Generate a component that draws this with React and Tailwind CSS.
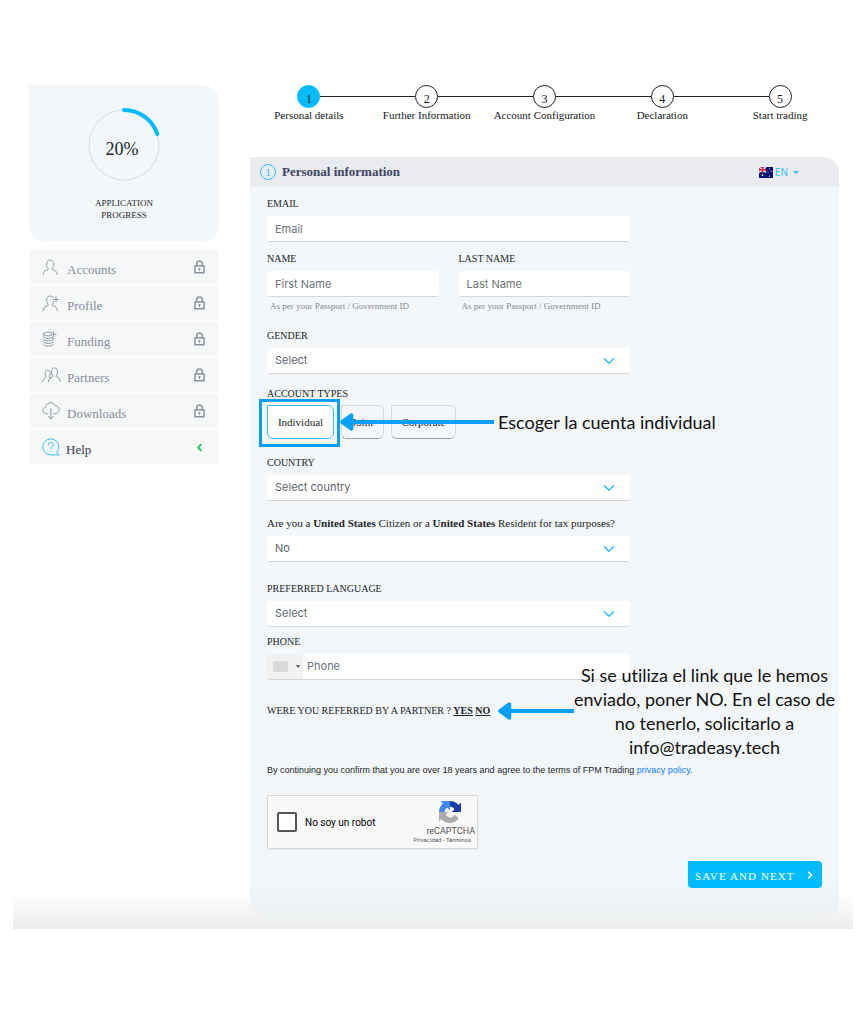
import React from 'react';
import { ChevronDown, ChevronRight, ChevronLeft } from 'lucide-react';

const STEPS = ['Personal details', 'Further Information', 'Account Configuration', 'Declaration', 'Start trading'];

const PersonIcon = () => (
  <svg width="17" height="17" viewBox="0 0 17 17" fill="none" stroke="currentColor" strokeWidth="0.9" strokeLinecap="round">
    <path d="M1 15.5c.3-3 2-4.3 4.8-4.8.5-.2.6-.8.3-1.2C5 8.200 4.600 6.800 4.600 5.200 4.600 2.700 6 1 8.100 1s3.600 1.700 3.600 4.200c0 1.600-.5 3-1.600 4.300-.3.4-.2 1 .3 1.200 2.900.5 4.600 1.800 4.900 4.800" />
  </svg>
);

const PersonPlusIcon = () => (
  <svg width="18" height="17" viewBox="0 0 18 17" fill="none" stroke="currentColor" strokeWidth="0.9" strokeLinecap="round">
    <path d="M11.200 2.400C10.600 1.500 9.600 1 8.300 1 6.100 1 4.700 2.700 4.700 5.200c0 1.600.5 3 1.500 4.300.3.4.2 1-.3 1.200C3.100 11.200 1.400 12.500 1 15.500M11.700 6.500c-.2 1.100-.6 2.100-1.400 3-.3.4-.2 1 .3 1.200 2.900.5 4.500 1.800 4.800 4.800" />
    <path d="M14 1.800v5.400M11.300 4.500h5.400" />
  </svg>
);

const CoinsIcon = () => (
  <svg width="17" height="17" viewBox="0 0 17 17" fill="none" stroke="currentColor" strokeWidth="0.9" strokeLinecap="round">
    <path d="M9.500 1.700C8.600 1.300 7.500 1.200 6.300 1.200c-2.800 0-5 .8-5 1.800s2.200 1.900 5 1.900c1.200 0 2.300-.2 3.200-.5" />
    <path d="M1.300 5.500c0 1 2.200 1.900 5 1.900s5-.9 5-1.900M1.300 8c0 1 2.200 1.900 5 1.900s5-.9 5-1.900M1.300 10.600c0 1 2.200 1.900 5 1.900s5-.9 5-1.900M1.300 13.200c0 1 2.200 1.900 5 1.900s5-.9 5-1.900M1.300 3v1.200M11.300 7v1" />
    <path d="M11.700.8v4.800M9.300 3.200h4.800" />
  </svg>
);

const PartnersIcon = () => (
  <svg width="19" height="17" viewBox="0 0 19 17" fill="none" stroke="currentColor" strokeWidth="0.9" strokeLinecap="round">
    <path d="M.8 14.500c.2-2.400 1.200-3.500 3-4 .5-.2.500-.6.200-1-.7-.9-1-1.900-1-3C3 4.500 4 3.300 5.700 3.300c1.600 0 2.600 1.200 2.600 3.200 0 1.100-.3 2.100-1 3-.3.4-.2.800.2 1 .6.2 1 .4 1.400.7" />
    <path d="M6.500 14.500c.3-2.700 1.600-4 4-4.500.5-.2.500-.8.200-1.200C9.900 7.700 9.500 6.500 9.500 5c0-2.400 1.100-4 3-4s3 1.600 3 4c0 1.500-.4 2.700-1.200 3.800-.3.400-.2 1 .2 1.200 2.400.5 3.500 1.800 3.800 4.500" />
  </svg>
);

const CloudIcon = () => (
  <svg width="18" height="18" viewBox="0 0 18 18" fill="none" stroke="currentColor" strokeWidth="0.9" strokeLinecap="round" strokeLinejoin="round">
    <path d="M6 11.800H4.300C2.300 11.800.8 10.400.8 8.600c0-1.600 1.100-2.900 2.600-3.200C3.700 2.700 5.900.8 8.600.8c2.200 0 4 1.200 4.800 3.100 2.100.1 3.800 1.800 3.800 3.900 0 2.200-1.700 4-3.900 4h-1.800" />
    <path d="M8.900 6.500v10.300M6.300 14.300l2.600 2.600 2.600-2.600" />
  </svg>
);

const HelpIcon = () => (
  <svg width="18" height="18" viewBox="0 0 18 18" fill="none" stroke="#35bdf6" strokeWidth="1" strokeLinecap="round" strokeLinejoin="round">
    <path d="M16.800 16.900H8.800A8 8 0 1 1 16.800 8.900c0 2-.7 3.800-1.900 5.200z" />
    <path d="M6.300 6.800c0-1.500 1.100-2.500 2.600-2.500s2.600 1 2.600 2.400c0 1.900-2.600 2-2.600 4M8.900 12.900v.2" />
  </svg>
);

const LockIcon = () => (
  <svg width="11" height="14" viewBox="0 0 11 14" fill="none" stroke="#8b91a3" strokeWidth="1.500">
    <path d="M1 6h9v6.800H1zM2.700 6V3.800C2.700 2.100 3.900 1 5.500 1s2.800 1.100 2.800 2.800V6" />
    <path strokeWidth="1.200" d="M5.500 8.800v2.200M4.500 8.500h2" />
  </svg>
);

const FlagIcon = () => (
  <svg width="14" height="11" viewBox="0 0 14 10" preserveAspectRatio="none">
    <path fill="#0a1172" d="M0 0h14v10H0z" />
    <path stroke="#fff" strokeWidth="1.200" d="M0 0l7 5M7 0L0 5" />
    <path stroke="#f6a9b4" strokeWidth="2" d="M3.500 0v5M0 2.500h7" />
    <path stroke="#e0243a" strokeWidth="1.200" d="M3.500 0v5M0 2.500h7" />
    <g fill="#fff">
      <circle cx="3.500" cy="7.600" r=".9" />
      <circle cx="10.500" cy="1.700" r=".5" />
      <circle cx="12.300" cy="4" r=".5" />
      <circle cx="9" cy="4.500" r=".5" />
      <circle cx="10.500" cy="8.300" r=".5" />
    </g>
  </svg>
);

const RecaptchaLogo = () => (
  <svg width="22" height="22" viewBox="0 0 64 64">
    <path fill="#1c3aa9" d="M64 31.955l-.033-1.370V4.687l-7.160 7.160C50.948 4.674 42.033.093 32.050.093c-10.400 0-19.622 4.960-25.458 12.640l11.736 11.860a15.550 15.550 0 0 1 4.754-5.334c2.050-1.600 4.952-2.906 8.968-2.906.485 0 .86.057 1.135.163 4.976.393 9.288 3.140 11.828 7.124l-8.307 8.307L64 31.953" />
    <path fill="#4285f4" d="M31.862.094l-1.370.033H4.594l7.160 7.160C4.580 13.147 0 22.060 0 32.046c0 10.400 4.960 19.622 12.640 25.458L24.500 45.768a15.550 15.550 0 0 1-5.334-4.754c-1.600-2.050-2.906-4.952-2.906-8.968 0-.485.057-.86.163-1.135.393-4.976 3.140-9.288 7.124-11.828l8.307 8.307L31.860.095" />
    <path fill="#ababab" d="M.001 32.045l.033 1.370v25.898l7.160-7.160c5.860 7.173 14.774 11.754 24.760 11.754 10.400 0 19.622-4.960 25.458-12.640l-11.736-11.860a15.550 15.550 0 0 1-4.754 5.334c-2.050 1.600-4.952 2.906-8.968 2.906-.485 0-.86-.057-1.135-.163-4.976-.393-9.288-3.140-11.828-7.124l8.307-8.307L0 32.046" />
  </svg>
);

const MENU = [
  { label: 'Accounts', Icon: PersonIcon },
  { label: 'Profile', Icon: PersonPlusIcon },
  { label: 'Funding', Icon: CoinsIcon },
  { label: 'Partners', Icon: PartnersIcon },
  { label: 'Downloads', Icon: CloudIcon },
];

const labelClass = 'mb-1 block text-[10px] leading-4';
const fieldClass =
  "block h-[26px] w-full appearance-none rounded-[3px] border-b border-[#d3d7db] bg-white px-2 font-['Inter',sans-serif] text-[11px] text-[#5f666d] outline-none placeholder:text-[#6c757d]";
const noteClass =
  "font-['Lato',sans-serif] text-lg leading-6 whitespace-nowrap text-[#111] [font-variant-ligatures:none]";

function SelectField({ id, option }) {
  return (
    <div className="grid items-center">
      <select id={id} className={`${fieldClass} col-start-1 row-start-1`}>
        <option>{option}</option>
      </select>
      <ChevronDown size={18} strokeWidth={2} className="pointer-events-none col-start-1 row-start-1 mr-3 justify-self-end text-[#35bdf6]" />
    </div>
  );
}

function NameField({ id, label, placeholder }) {
  return (
    <div>
      <label htmlFor={id} className={labelClass}>{label}</label>
      <input id={id} type="text" placeholder={placeholder} className={fieldClass} />
      <p className="pl-[3px] pt-px text-[9px] leading-4 whitespace-nowrap text-[#85898d]">As per your Passport / Government ID</p>
    </div>
  );
}

function Arrow({ length }) {
  return (
    <svg width={length} height="18" className="shrink-0" fill="#05a0f5">
      <path d={`M11 7H${length}v4H11z`} />
      <path d="M2 9L11.500 2v14z" stroke="#05a0f5" strokeWidth="3.500" strokeLinejoin="round" />
    </svg>
  );
}

function Sidebar() {
  return (
    <aside className="w-[190px] shrink-0">
      <div className="flex flex-col items-center rounded-2xl rounded-tl-none bg-[#f3f7fa] pt-[22px] pb-5">
        <div className="grid place-items-center">
          <svg width="76" height="76" viewBox="0 0 76 76" fill="none" className="col-start-1 row-start-1">
            <circle cx="38" cy="38" r="35" stroke="#d9dadc" />
            <path d="M38 3A35 35 0 0 1 71.300 27.200" stroke="#00bcff" strokeWidth="4" strokeLinecap="round" />
          </svg>
          <span className="col-start-1 row-start-1 pt-2 pr-1 text-lg leading-6">20%</span>
        </div>
        <p className="mt-[14px] text-center text-[9px] leading-3">APPLICATION<br />PROGRESS</p>
      </div>
      <nav className="mt-[9px] flex flex-col gap-0.5 text-[13px] text-[#868c9c]">
        {MENU.map(({ label, Icon }) => (
          <a key={label} href="#" className="flex h-[34px] items-center bg-[#f6f8f8] pr-[14px] pl-[13px]">
            <span className="w-[25px]"><Icon /></span>
            <span className="flex-1 pt-1.5">{label}</span>
            <LockIcon />
          </a>
        ))}
        <a href="#" className="flex h-[34px] items-center bg-[#f6f8f8] pr-[14px] pl-[13px]">
          <span className="w-6"><HelpIcon /></span>
          <span className="flex-1 pt-1.5 text-[#343a52]">Help</span>
          <ChevronLeft size={11} strokeWidth={4} className="text-[#27c765]" />
        </a>
      </nav>
    </aside>
  );
}

function Stepper() {
  return (
    <ol className="grid grid-cols-5 text-center text-[11px] leading-[14px] text-[#17191c]">
      {STEPS.map((step, i) => (
        <li key={step}>
          <div className="flex items-center">
            <span className={`h-px flex-1 ${i === 0 ? '' : 'bg-[#222]'}`} />
            <span className={`flex size-[23px] items-center justify-center rounded-full border pt-1 text-xs ${i === 0 ? 'border-[#00bcff] bg-[#00bcff]' : 'border-[#222] bg-white'}`}>
              {i + 1}
            </span>
            <span className={`h-px flex-1 ${i === STEPS.length - 1 ? '' : 'bg-[#222]'}`} />
          </div>
          <span className="whitespace-nowrap">{step}</span>
        </li>
      ))}
    </ol>
  );
}

function AccountTypes() {
  const other = 'h-[34px] rounded-md rounded-tl-none border border-[#d3d7db] border-b-[#444] [border-bottom-style:dotted]';
  return (
    <fieldset className="mt-3">
      <legend className="mb-[3px] text-[10px] leading-4">ACCOUNT TYPES</legend>
      <div className="relative flex gap-[7px] text-[11px]">
        <div className="relative">
          <button type="button" className="h-[34px] w-[67px] rounded-md rounded-tl-none border border-[#35bdf6] bg-white">Individual</button>
          <div className="pointer-events-none absolute -top-1.5 -right-1.5 -bottom-2 -left-2 border-3 border-[#05a0f5]" />
        </div>
        <button type="button" className={`${other} w-[43px]`}>Joint</button>
        <button type="button" className={`${other} w-[65px]`}>Corporate</button>
        {/* Note on the chosen account type */}
        <div className="pointer-events-none absolute inset-y-0 left-[73px] flex items-center gap-1">
          <Arrow length={154} />
          <p className={noteClass}>Escoger la cuenta individual</p>
        </div>
      </div>
    </fieldset>
  );
}

function PersonalForm() {
  return (
    <form className="flex flex-col rounded-b-2xl bg-gradient-to-t from-[#ecf0f3] to-[#f3f7fa] to-[40px] pt-[9px] pr-[17px] pb-[29px] pl-[17px]">
      <div className="w-full max-w-[363px]">
        <label htmlFor="email" className={labelClass}>EMAIL</label>
        <input id="email" type="email" placeholder="Email" className={fieldClass} />

        <div className="mt-[9px] grid grid-cols-2 gap-5">
          <NameField id="first-name" label="NAME" placeholder="First Name" />
          <NameField id="last-name" label="LAST NAME" placeholder="Last Name" />
        </div>

        <div className="mt-[14px]">
          <label htmlFor="gender" className={labelClass}>GENDER</label>
          <SelectField id="gender" option="Select" />
        </div>

        <AccountTypes />

        <div className="mt-4">
          <label htmlFor="country" className={labelClass}>COUNTRY</label>
          <SelectField id="country" option="Select country" />
        </div>

        <div className="mt-[14px]">
          <label htmlFor="us-resident" className="mb-[5px] block text-[11px] leading-4 whitespace-nowrap">
            Are you a <b>United States</b> Citizen or a <b>United States</b> Resident for tax purposes?
          </label>
          <SelectField id="us-resident" option="No" />
        </div>

        <div className="mt-[19px]">
          <label htmlFor="language" className={labelClass}>PREFERRED LANGUAGE</label>
          <SelectField id="language" option="Select" />
        </div>

        <div className="mt-[7px]">
          <label htmlFor="phone" className={labelClass}>PHONE</label>
          <div className="flex h-[26px] rounded-[3px] border-b border-[#d3d7db] bg-white">
            <button type="button" aria-label="Dial code" className="flex w-9 shrink-0 items-center gap-2 bg-[#f1f1f1] pl-1.5">
              <span className="h-[11px] w-[15px] rounded-xs bg-[#dadada]" />
              <span className="border-x-2 border-t-3 border-x-transparent border-t-[#555]" />
            </button>
            <input id="phone" type="tel" placeholder="Phone" className="min-w-0 flex-1 px-1 font-['Inter',sans-serif] text-[11px] outline-none placeholder:text-[#6c757d]" />
          </div>
        </div>
      </div>

      <div className="relative mt-[23px] text-[10px] leading-4">
        WERE YOU REFERRED BY A PARTNER ? <a href="#" className="font-bold underline">YES</a> <a href="#" className="font-bold underline">NO</a>
        {/* Note on the referral answer */}
        <div className="pointer-events-none absolute inset-y-0 left-[231px] flex items-center">
          <Arrow length={76} />
          <p className={`${noteClass} text-center`}>
            Si se utiliza el link que le hemos<br />
            enviado, poner NO. En el caso de<br />
            no tenerlo, solicitarlo a<br />
            info@tradeasy.tech
          </p>
        </div>
      </div>

      <p className="mt-[43px] font-['Liberation_Sans',sans-serif] text-[9px] leading-4">
        By continuing you confirm that you are over 18 years and agree to the terms of FPM Trading <a href="#" className="text-[#087cff]">privacy policy</a>.
      </p>

      <div className="mt-[17px] flex h-[54px] w-[211px] items-center rounded-xs border border-[#d6d6d6] bg-[#f9f9f9] pr-0.5 pl-[9px] font-['Roboto',sans-serif] shadow-xs">
        <input id="robot" type="checkbox" className="size-5 appearance-none rounded-xs border-2 border-[#555] bg-white" />
        <label htmlFor="robot" className="flex-1 pl-2 text-[10px] text-black">No soy un robot</label>
        <div className="flex flex-col items-end text-[#555]">
          <span className="mr-3.5"><RecaptchaLogo /></span>
          <span className="mt-[3px] text-[9px] leading-[10px]">reCAPTCHA</span>
          <span className="mr-1 text-[6px] leading-2">Privacidad - Términos</span>
        </div>
      </div>

      <button type="submit" className="mt-3 flex h-[27px] w-[134px] items-center justify-between self-end rounded-[4px] rounded-tl-none bg-[#00bcff] pr-1.5 pl-[7px] text-[11px] tracking-widest text-white">
        <span className="pt-1 whitespace-nowrap">SAVE AND NEXT</span>
        <ChevronRight size={12} strokeWidth={3} />
      </button>
    </form>
  );
}

export default function App() {
  return (
    <div className="min-h-screen bg-white pb-24 font-['Liberation_Serif',serif] text-[#212529]">
      <div className="mx-[13px] flex gap-[31px] bg-gradient-to-t from-[#ececec] to-white to-[36px] pt-[85px] pr-[14px] pb-3 pl-4">
        <Sidebar />
        <main className="min-w-0 flex-1">
          <Stepper />
          <header className="mt-[35px] flex h-[30px] items-center rounded-tr-2xl bg-[#e9ebef] pr-10 pl-2.5">
            <span className="flex size-4 items-center justify-center rounded-full border border-[#35bdf6] text-[11px] text-[#35bdf6]">1</span>
            <h1 className="ml-1.5 flex-1 text-[13px] font-bold text-[#3d4560]">Personal information</h1>
            <button type="button" className="flex items-center gap-0.5 font-['Noto_Sans',sans-serif] text-[10px] text-[#35bdf6]">
              <FlagIcon />
              EN
              <span className="ml-[3px] border-x-3 border-t-3 border-x-transparent border-t-[#35bdf6]" />
            </button>
          </header>
          <PersonalForm />
        </main>
      </div>
    </div>
  );
}
